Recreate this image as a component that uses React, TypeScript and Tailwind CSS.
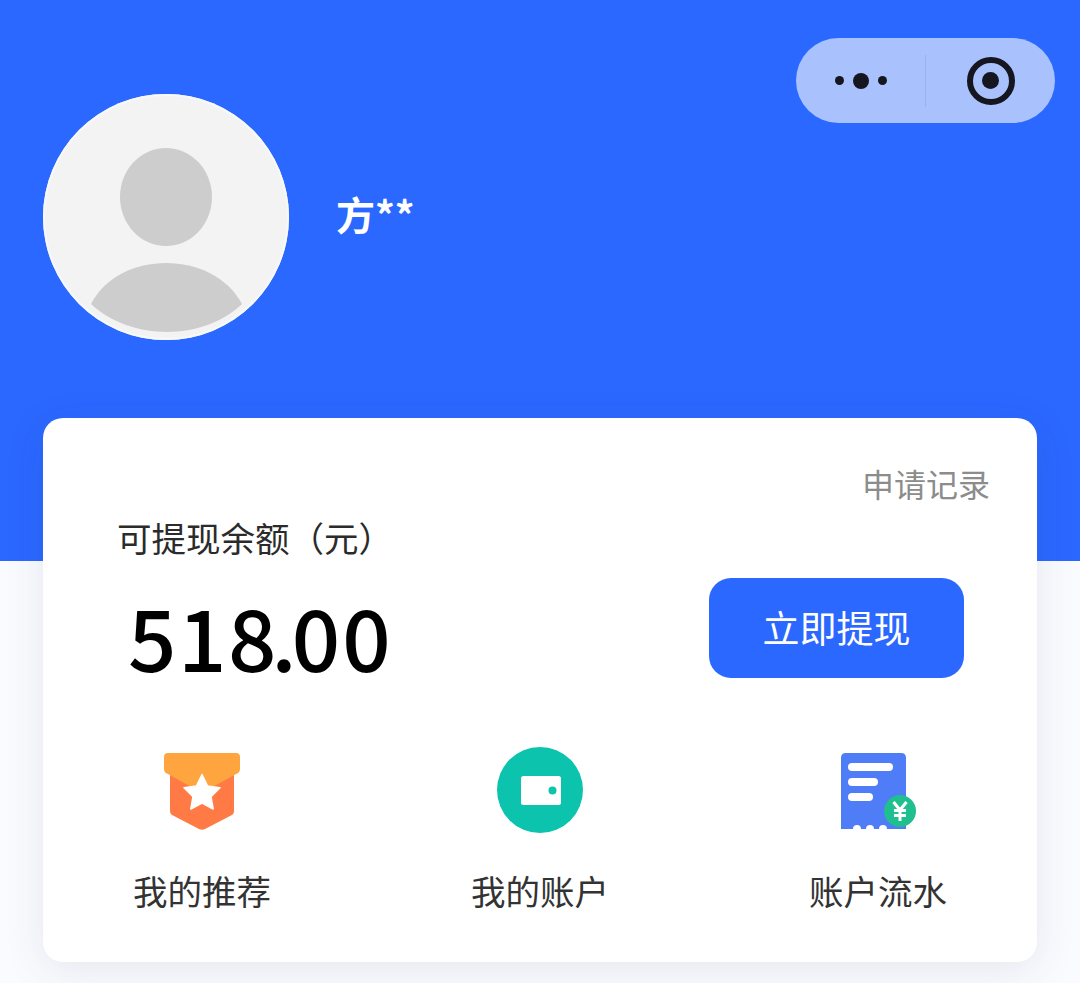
import React from "react";

const font = { cjk: "font-['Noto_Sans_CJK_SC','Noto_Sans',sans-serif]" };

function MedalIcon() {
  return (
    <svg width="76" height="78" viewBox="0 0 76 78">
      <path d="M6 10H70V58Q70 61 67 62.500L41 76Q38 77.500 35 76L9 62.500Q6 61 6 58Z" fill="#ff7a45" />
      <path d="M4 0H72Q76 0 76 4V16Q76 20 72 21L38 40L4 21Q0 20 0 16V4Q0 0 4 0Z" fill="#ffa540" />
      <path d="M38 21.500L43.600 33L56 34.800L47 43.600L49.200 56L38 50.100L26.800 56L29 43.600L20 34.800L32.400 33Z" fill="#fff" stroke="#fff" strokeWidth="1.500" strokeLinejoin="round" />
    </svg>
  );
}

function WalletIcon() {
  return (
    <svg width="86" height="86" viewBox="0 0 86 86">
      <circle cx="43" cy="43" r="43" fill="#0cc4ae" />
      <rect x="24" y="29" width="40" height="29" rx="2.500" fill="#fff" />
      <circle cx="55.500" cy="43.500" r="4" fill="#0cc4ae" />
    </svg>
  );
}

function ReceiptIcon() {
  return (
    <svg width="78" height="78" viewBox="0 0 78 78">
      <path d="M7 1H62Q67 1 67 6V77H48A4 4 0 0 0 40 77H35A4 4 0 0 0 27 77H22A4 4 0 0 0 14 77H2V6Q2 1 7 1Z" fill="#4f7cf7" />
      <rect x="9" y="11" width="45" height="8" rx="4" fill="#fff" />
      <rect x="9" y="26" width="30" height="8" rx="4" fill="#fff" />
      <rect x="9" y="41" width="25" height="8" rx="4" fill="#fff" />
      <circle cx="61" cy="59" r="16" fill="#1fbf8f" />
      <path d="M54.500 50L61 58L67.500 50M55 58.500H67M55 63.500H67M61 58V69" fill="none" stroke="#fff" strokeWidth="3" />
    </svg>
  );
}

const actions = [
  { label: "我的推荐", icon: <MedalIcon />, pad: "pt-[6px]" },
  { label: "我的账户", icon: <WalletIcon />, pad: "pt-0" },
  { label: "账户流水", icon: <ReceiptIcon />, pad: "pt-[5px]" },
];

export default function App() {
  return (
    <div className={`relative h-[983px] w-[1080px] overflow-hidden bg-[#fafbfe] ${font.cjk}`}>
      <div className="h-[561px] bg-[#2b68ff] pl-[43px] pt-[94px]">
        <div className="flex items-center gap-[47px]">
          <div className="relative h-[246px] w-[246px] overflow-hidden rounded-full bg-[#f3f3f4] shadow-[inset_0_0_0_2px_#f7f8fa]">
            <div className="absolute left-[77px] top-[54px] h-[98px] w-[92px] rounded-[50%] bg-[#cdcdcd]" />
            <svg className="absolute left-0 top-0" width="246" height="246" viewBox="0 0 246 246">
              <path d="M48 210C76 155.300 170 155.300 199 210C160 247.300 88 247.300 48 210Z" fill="#cdcdcd" />
            </svg>
          </div>
          <div className="mb-[7px] text-[39px] font-semibold leading-none text-white">方**</div>
        </div>
      </div>

      {/* 小程序胶囊按钮 */}
      <div className="absolute left-[796px] top-[38px] flex h-[85px] w-[259px] items-center rounded-full bg-[#a9c2fd]">
        <div className="flex w-[129px] items-center justify-center gap-[9px]">
          <span className="h-[9px] w-[9px] rounded-full bg-[#15161f]" />
          <span className="h-[16px] w-[16px] rounded-full bg-[#15161f]" />
          <span className="h-[9px] w-[9px] rounded-full bg-[#15161f]" />
        </div>
        <div className="h-[52px] w-px bg-[#97b1f5]" />
        <div className="flex flex-1 items-center justify-center">
          <div className="flex h-[48px] w-[48px] items-center justify-center rounded-full border-[6px] border-[#15161f]">
            <span className="h-[17px] w-[17px] rounded-full bg-[#15161f]" />
          </div>
        </div>
      </div>

      <div className="relative mx-[43px] -mt-[143px] h-[544px] rounded-[20px] bg-white px-[47px] pt-[45px] shadow-[0_8px_40px_rgba(40,60,110,0.1)]">
        <div className="text-right text-[32px] leading-[40px] text-[#8c8c8c]">申请记录</div>
        <div className="flex items-start justify-between pl-[27px] pr-[26px]">
          <div>
            <div className="mt-[14px] text-[34.500px] font-normal leading-[40px] text-[#2b2b2b]">可提现余额（元）</div>
            <div className="mt-[28px] pl-[11px] text-[85px] font-medium leading-[100px] text-black">
              <span className="tracking-[1.500px]">51</span>
              <span className="tracking-[-5px]">8</span>
              <span className="tracking-[-5px]">.</span>
              <span className="tracking-[2px]">00</span>
            </div>
          </div>
          <button className="mt-[75px] flex h-[100px] w-[255px] items-center justify-center rounded-[22px] bg-[#2b68ff] text-[37px] text-white">
            立即提现
          </button>
        </div>
        <div className="-mx-[57px] mt-[62px] grid grid-cols-3">
          {actions.map((a) => (
            <div key={a.label} className="flex flex-col items-center">
              <div className={`flex h-[92px] items-start ${a.pad}`}>{a.icon}</div>
              <div className="mt-[29px] text-[34.500px] leading-[44px] text-[#333]">{a.label}</div>
            </div>
          ))}
        </div>
      </div>
    </div>
  );
}
